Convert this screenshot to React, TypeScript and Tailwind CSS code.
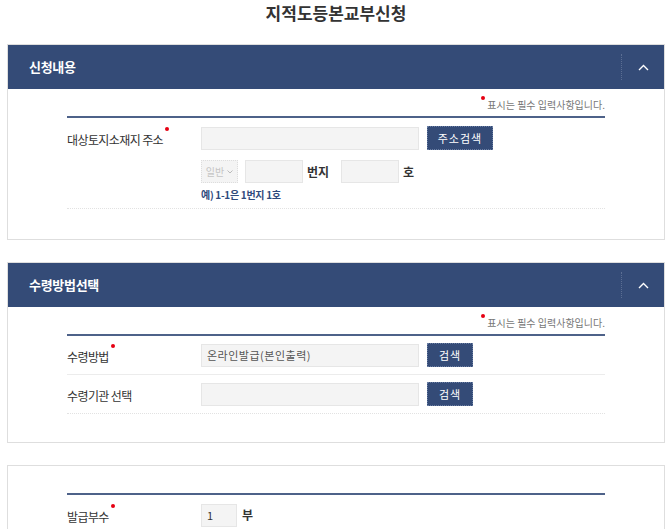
import React from 'react'

const font = { fontFamily: '"Noto Sans CJK KR", "Noto Sans", sans-serif' }

function Dot() {
    return <span className="absolute -right-[6px] -top-[4px] h-[4px] w-[4px] rounded-full bg-[#e60012]" />
}

function Label({ text, required }: { text: string; required?: boolean }) {
    return (
        <div className="w-[134px] shrink-0">
            <span className="relative text-[12px] tracking-[-0.6px] text-[#333]">
                {text}
                {required && <Dot />}
            </span>
        </div>
    )
}

function Btn({ children, w }: { children: React.ReactNode; w: string }) {
    return (
        <button className={`${w} ml-[8px] h-[24px] border border-dotted border-[#6a7ea3] bg-[#344b77] text-[11px] tracking-[1px] text-white`}>
            {children}
        </button>
    )
}

function Header({ title }: { title: string }) {
    return (
        <div className="flex h-[44px] items-center bg-[#344b77]">
            <div className="flex-1 pl-[21px] text-[13px] font-bold tracking-[-0.3px] text-white">{title}</div>
            <div className="h-[26px] border-l border-dotted border-[#5b6e93]" />
            <div className="flex w-[42px] justify-center">
                <svg width="11" height="7" viewBox="0 0 11 7" fill="none">
                    <polyline points="1,6 5.5,1.5 10,6" stroke="white" strokeWidth="1.4" />
                </svg>
            </div>
        </div>
    )
}

function Note() {
    return (
        <div className="flex h-[16px] items-center justify-end">
            <span className="relative pl-[6px] text-[10px] text-[#777]">
                <span className="absolute left-0 -top-[1px] h-[4px] w-[4px] rounded-full bg-[#e60012]" />
                표시는 필수 입력사항입니다.
            </span>
        </div>
    )
}

export default function App() {
    return (
        <div className="min-h-[529px] bg-white pb-[10px]" style={font}>
            <h1 className="h-[44px] pt-[1px] text-center text-[17px] font-bold leading-[24px] text-[#333]">지적도등본교부신청</h1>

            <div className="mx-[7px] border border-[#dedede]">
                <Header title="신청내용" />
                <div className="px-[59px] pb-[30px] pt-[7px]">
                    <Note />
                    <div className="mt-[4px] h-[2px] bg-[#4e6289]" />
                    <div className="flex items-center pt-[8px]">
                        <Label text="대상토지소재지 주소" required />
                        <div className="h-[23px] w-[218px] border border-[#e6e6e6] bg-[#f4f4f4]" />
                        <Btn w="w-[66px]">주소검색</Btn>
                    </div>
                    <div className="flex items-center pl-[134px] pt-[10px]">
                        <div className="flex h-[23px] w-[37px] items-center justify-center gap-[3px] border border-dotted border-[#ddd] bg-[#f4f4f4] text-[10px] text-[#c4c4c4]">
                            일반
                            <svg width="6" height="4" viewBox="0 0 6 4" fill="none">
                                <polyline points="0.5,0.5 3,3 5.5,0.5" stroke="#bbb" strokeWidth="1" />
                            </svg>
                        </div>
                        <div className="ml-[7px] h-[23px] w-[58px] border border-[#e6e6e6] bg-[#f4f4f4]" />
                        <span className="ml-[4px] w-[34px] text-[12px] font-bold text-[#333]">번지</span>
                        <div className="h-[23px] w-[58px] border border-[#e6e6e6] bg-[#f4f4f4]" />
                        <span className="ml-[4px] text-[12px] font-bold text-[#333]">호</span>
                    </div>
                    <div className="pl-[134px] pt-[4px] text-[10px] font-bold tracking-[-0.3px] text-[#2f4a7c]">예) 1-1은 1번지 1호</div>
                    <div className="mt-[6px] border-t border-dotted border-[#e2e2e2]" />
                </div>
            </div>

            <div className="mx-[7px] mt-[22px] border border-[#dedede]">
                <Header title="수령방법선택" />
                <div className="px-[59px] pb-[28px] pt-[7px]">
                    <Note />
                    <div className="mt-[4px] h-[2px] bg-[#4e6289]" />
                    <div className="flex items-center py-[7px]">
                        <Label text="수령방법" required />
                        <div className="flex h-[23px] w-[218px] items-center border border-[#e6e6e6] bg-[#f4f4f4] pl-[5px] text-[11px] tracking-[0.5px] text-[#555]">
                            온라인발급(본인출력)
                        </div>
                        <Btn w="w-[46px]">검색</Btn>
                    </div>
                    <div className="border-t border-[#ececec]" />
                    <div className="flex items-center py-[7px]">
                        <Label text="수령기관 선택" />
                        <div className="h-[23px] w-[218px] border border-[#e6e6e6] bg-[#f4f4f4]" />
                        <Btn w="w-[46px]">검색</Btn>
                    </div>
                    <div className="border-t border-dotted border-[#e2e2e2]" />
                </div>
            </div>

            <div className="mx-[7px] mt-[22px] border border-[#dedede]">
                <div className="px-[59px] pb-[20px] pt-[27px]">
                    <div className="h-[2px] bg-[#4e6289]" />
                    <div className="flex items-center pt-[8px]">
                        <Label text="발급부수" required />
                        <div className="flex h-[23px] w-[36px] items-center border border-[#e6e6e6] bg-[#f4f4f4] pl-[5px] text-[11px] text-[#333]">1</div>
                        <span className="ml-[5px] text-[12px] font-bold text-[#333]">부</span>
                    </div>
                </div>
            </div>
        </div>
    )
}
